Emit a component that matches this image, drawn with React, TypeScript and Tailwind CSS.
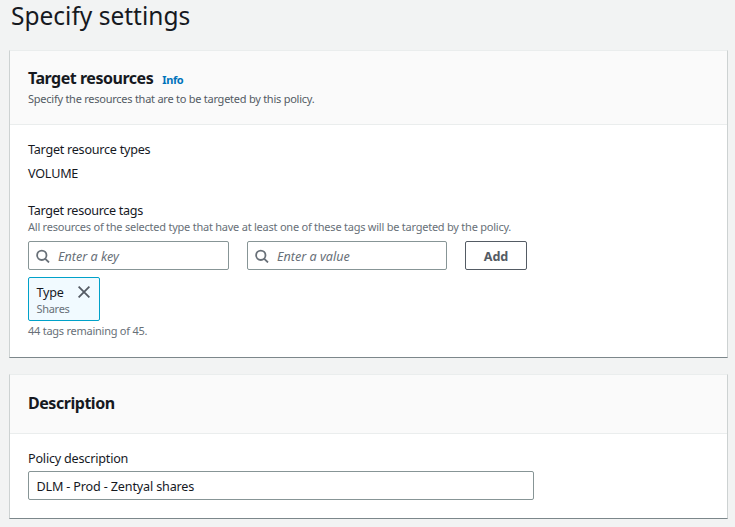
import type { ReactNode } from 'react';

function SearchIcon() {
  return (
    <svg width="14" height="14" viewBox="0 0 14 14" fill="none" stroke="#687078" strokeWidth="1.8" className="shrink-0">
      <circle cx="5.8" cy="6.3" r="4.7" />
      <path d="M9.1 9.6 L13 13.5" />
    </svg>
  );
}

function CloseIcon() {
  return (
    <svg width="12" height="12" viewBox="0 0 12 12" fill="none" stroke="#545b64" strokeWidth="1.8" className="mt-2 shrink-0">
      <path d="M0.6 0.6 L11.4 11.4 M11.4 0.6 L0.6 11.4" />
    </svg>
  );
}

function Card({ header, children, className }: { header: ReactNode; children: ReactNode; className: string }) {
  return (
    <section className={`flex flex-col border border-x-[#cdd2d2] border-t-[#eaeded] border-b-[#7c878b] bg-white ${className}`}>
      {header}
      <div className="flex flex-col px-[18px]">{children}</div>
    </section>
  );
}

function SearchField({ placeholder, className }: { placeholder: string; className: string }) {
  return (
    <div className={`flex h-[29px] items-center gap-2 rounded-[2px] border border-[#879596] bg-white pl-[7px] ${className}`}>
      <SearchIcon />
      <span className="pt-0.5 text-[12.6px] italic leading-[18px] text-[#687078]">{placeholder}</span>
    </div>
  );
}

export default function App() {
  return (
    <main className="h-[527px] overflow-hidden bg-[#f2f3f3] pl-[9px] pr-[7px] font-['Noto_Sans','Open_Sans',sans-serif] text-[12.6px] leading-[18px] text-[#16191f]">
      <h1 className="h-[50px] pl-0.5 text-[24.5px] leading-[32px]">Specify settings</h1>

      <Card
        className="h-[308px]"
        header={
          <header className="h-[74px] border-b border-[#eaeded] bg-[#fafafa] px-[18px] pt-4">
            <div className="flex items-baseline gap-[9px]">
              <h2 className="text-[16px] font-bold leading-[22px] tracking-[-0.47px]">Target resources</h2>
              <a className="text-[11px] font-bold tracking-[-0.4px] text-[#0073bb]">Info</a>
            </div>
            <p className="mt-0.5 text-[11px] leading-4 tracking-[-0.25px] text-[#545b64]">
              Specify the resources that are to be targeted by this policy.
            </p>
          </header>
        }
      >
        <div className="mt-4 tracking-[-0.25px]">Target resource types</div>
        <div className="mt-1.5 tracking-[-0.2px]">VOLUME</div>
        <div className="mt-[19px] tracking-[-0.3px]">Target resource tags</div>
        <p className="-mt-px text-[11px] leading-4 tracking-[-0.235px] text-[#687078]">
          All resources of the selected type that have at least one of these tags will be targeted by the policy.
        </p>
        <div className="mt-1.5 flex">
          <SearchField placeholder="Enter a key" className="w-[201px]" />
          <SearchField placeholder="Enter a value" className="ml-[18px] w-[200px]" />
          <button className="ml-[18px] h-[29px] w-[62px] rounded-[2px] border border-[#545b64] pt-0.5 font-bold text-[#545b64]">Add</button>
        </div>
        <div className="mt-[7px] flex h-11 w-[72px] justify-between rounded-[2px] border border-[#00a1c9] bg-[#f1faff] pl-[7.5px] pr-[9px]">
          <div className="pt-1.5">
            <div className="tracking-[-0.2px]">Type</div>
            <div className="text-[11px] leading-[14px] tracking-[-0.3px] text-[#687078]">Shares</div>
          </div>
          <CloseIcon />
        </div>
        <p className="mt-0.5 text-[11px] leading-4 tracking-[-0.25px] text-[#687078]">44 tags remaining of 45.</p>
      </Card>

      <Card
        className="mt-4 h-[145px]"
        header={
          <header className="h-[59px] border-b border-[#eaeded] bg-[#fafafa] px-[18px] pt-[17px]">
            <h2 className="text-[16px] font-bold leading-[22px] tracking-[-0.46px]">Description</h2>
          </header>
        }
      >
        <label className="mt-4 tracking-[-0.2px]">Policy description</label>
        <div className="mt-[3px] flex h-[29px] w-[506px] items-center rounded-[2px] border border-[#879596] pl-[7.5px] pt-0.5 tracking-[-0.16px]">
          DLM - Prod - Zentyal shares
        </div>
      </Card>
    </main>
  );
}
